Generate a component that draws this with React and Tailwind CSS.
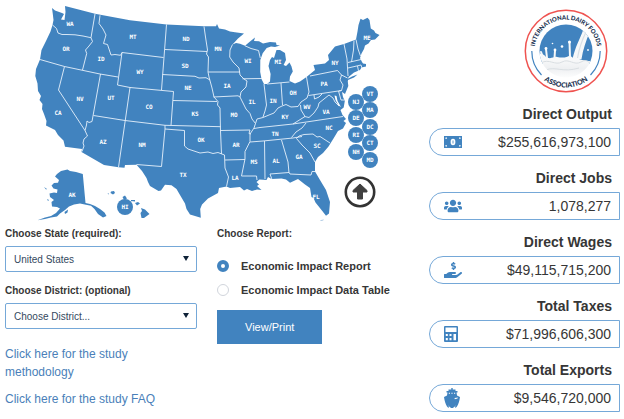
import { useState } from "react";
import { FaHandHoldingUsd, FaUsers } from "react-icons/fa";

const MAINLAND =
  "M52 8L55 10.5L62 13L64 14L61 19.5L64.5 20L65.5 12L65 6L95 13.7L130 20.2L166.5 24.5L204 26.3L216 26.3L217 24L219 28.5L225 29.5L230 31.5L235 32.2L244 33.5L238 38.5L232.5 44.5L236 43L240 43.8L245 45.8L250 41.5L255 37.6L254 41L259 41.2L263 43.6L270 42L276 42.6L276.5 45L280 45.5L275 47L271 46.6L266.7 48L262.7 53.3L260.3 60L260.2 72L261.5 79L264 84L267 84L270 81.5L270.6 74L268.5 66L270 60L272 57L274 58L276.5 50L280 50L285 53L286 60L283.6 65L286 66L289.5 62.5L291.5 66.5L292.8 71.5L290 76.5L289.5 81L295 83.5L300 81.5L306.5 77L315 70L313.5 65L325 63.5L329 60L328 55L335 46.5L344 44L356 39.5L357.5 31.5L358.5 25L360.5 18.8L363 20L367.5 17.7L369.5 20L370.8 28.5L374 30.5L375.5 33L379.5 35L375 39.5L371 40L368.5 43.5L365 45.5L364 49L361.5 53.5L360 58L362 62L363 63.5L366 64L366 66.5L361.5 67.5L360 70L354 72.5L348.5 77L347.8 81.5L348.3 86L345 94L342 92L343 97L344.8 101L343.7 107.5L340.5 110L342.5 115L346 119L343.5 121L346 123L343 128.5L338 131L333.5 138.5L328.5 146.5L323 153L318 157L315 162L315 171.5L320 180L326 190L330 202L329 213.5L326 215.8L321.5 210L315.5 202.5L313.5 198L311.5 197L310 188L305 184.5L298 179L290 182.8L286 179.5L281.5 178.5L271.5 179L268 177L266.5 180L259.5 179.5L256.5 182L259 184.5L257 186L261.5 190L257 189.5L252 191L247 189L244 190.5L240 187L230 188L226.5 186.5L219 188L218 193L208 198.5L202 204.5L200.2 209L200.8 217.8L190 214.5L186.5 209L185 203.5L180 195L176.5 189L171.5 185.3L165 184.8L161 190.5L158.5 191L150 186L148 182L146.5 178L142 171L136.5 164.8L125 165L124.5 167.8L118.5 167.3L104 165L81.5 152L82 149L65 146.8L63.5 140.5L58 135L55 130L46 125.5L46.5 121L44 114L42 109L42.5 104L39.5 100L41 96L38 91L37.5 83.5L35.3 76L36 69L40 59.5L41.5 50L46 41L50.5 31.5L52.5 25L53.5 20L52.8 14Z";

const ALASKA =
  "M67.5 169.5L70 171L76 172L82.8 174L85.5 203L90 204L95 206L100 209L104.5 212.5L106.5 216L103 217.5L98 214L94.5 209L91 205.8L86 204.8L80 203.5L74 204.5L69 206.5L65 210L60 213.5L57 216.5L51 217.5L45 219L37.5 220.3L45 217.5L51 216L56 213L60 208.5L57 207L52 206.5L51.5 202L54 200L50 197L49.5 193.5L54 192.5L57 193L57.5 189.5L53.5 188.5L51.5 185.5L54 183L58 182.8L59 180L55 176.5L57 174L61 171Z";

const BORDERS = [
  "M52.5 25L56.5 28.5L58 33L62 34.5L67 34.5L75 34.8L83 36L91 37.7",
  "M95 14L91 37.7L92.5 41.5L89 46L85.5 50L86.7 53.5L82.5 70",
  "M100 15.3L99 23.5L103 29L106 35L103.5 43.5L107.5 44.5L111 55L115 54.5L120.5 55.3L122 52.5",
  "M122 52.5L163.5 57.5",
  "M122 52.5L117.5 85",
  "M40 59.5L64.5 66.5L100 74L118 77",
  "M117.5 85L130 87.5L173.5 91.5",
  "M64.5 66.5L58.5 90L85 130.5L87.5 136L84 139L83 143L84 146L82 151.5",
  "M100.5 74L92 121.5L89 122.5L87 121L86.5 125L85 130.5",
  "M93.5 115.5L125 120.5L165 125.3L220.5 126.7",
  "M130 87.5L118.5 167.3",
  "M166.5 24.5L161.5 90",
  "M165 49.5L207 51.5",
  "M162.5 74.5L195 76.3L199 78L206 77.7L210 80",
  "M204 26.5L205.5 37L207.5 50L206.5 54L208.5 57L208 72L209 77L212 88L214 97L218 101.5L217.5 105L220 108L220.5 131L221.5 154",
  "M208 72L240 72",
  "M213.5 97L238 95.8L240 97",
  "M232.5 44.5L230 50L229.7 57L233 62L239 68L240 75L244 79L247 81L246 87L241 92L240 97L243 103L246 109L250 113.5L252 119L255.5 123.5L254 128L250 134L250 141.5L245 151.5L245 159L241.5 176L256.5 176L257 180",
  "M242.5 78.8L262 78.5",
  "M245 45.8L251 48.5L258.5 50.5L260.3 58",
  "M173.5 91.5L171 125.5",
  "M173 100.5L217 101.5",
  "M165 125.3L165 129L184.5 130.5L184.5 146L188 149L194 151L200 153L208 152L213 153.5L218 152.5L224.5 155L225 168L228.5 177L226.5 186.5",
  "M165 129L161.5 166.5L136.5 164.5",
  "M225 160L245 159.5",
  "M220.5 130.5L250 130L249 133.5L251 134",
  "M254 128.5L260 127.5L293 124L343 116.5",
  "M250 142L263 141L293 138L302 136.5",
  "M306 123L302 128L296 132L291.5 137.5",
  "M296.5 138.5L299 136L304 134.5L313 134L317 137L320 136.5L330 143",
  "M296.5 138.5L302 145L310 153L315 162",
  "M264.5 141L265 179",
  "M281.5 140L288 162L289 173",
  "M272 179.5L270 174L289 172.5L290 174L311 175L312 171.5L315 171.5",
  "M264 84L266.5 105L265 111L263 117",
  "M255.5 123.5L257 119L263 117.5L269 115L274 113L278 108L282 106L286 104.5L291 107L298 106.5L301 102L307 98L309 92L306.5 77",
  "M281 83L282.5 105",
  "M267 84L289.5 82",
  "M308.5 95.5L341.5 90.5",
  "M310 76L337.5 70.5L341.5 75L340 80L343 85L341.5 90.5L339 91",
  "M341.5 75L347.5 78",
  "M344 44L347 59L348 76",
  "M354 40.5L353.5 50L351.5 62",
  "M356 39.5L358 49L360.5 56",
  "M348 62.5L361 59.5",
  "M348 68L361 65L362 68",
  "M357.5 66L358.5 71",
  "M293 124L305 116.5L301 110L300.5 105",
  "M304.5 116.5L309 117.5L314 113L318 107L319 103L324 99L329 95L333 98L335 102L339 106",
  "M314 95L314.5 99L319 97L322 94",
  "M338.5 91L341 100L344.5 100",
];

const STATES = [
  ["WA", 70, 24], ["OR", 66, 49], ["ID", 101, 59], ["MT", 133, 37], ["WY", 140, 72],
  ["ND", 186, 39], ["SD", 185, 66], ["NE", 188, 88], ["MN", 218, 49], ["WI", 248, 61],
  ["IA", 227, 86], ["IL", 252, 102], ["MI", 278, 62], ["IN", 273, 101], ["OH", 293, 93],
  ["PA", 324, 84], ["NY", 335, 63], ["ME", 367, 38], ["WV", 307, 107], ["VA", 326, 112],
  ["KY", 285, 117], ["NC", 329, 128], ["TN", 275, 134], ["SC", 317, 146], ["GA", 299, 157],
  ["AL", 276, 161], ["MS", 254, 162], ["LA", 235, 178], ["AR", 236, 145], ["MO", 234, 115],
  ["KS", 195, 114], ["OK", 201, 140], ["TX", 183, 175], ["NM", 142, 145], ["AZ", 103, 142],
  ["CO", 149, 107], ["UT", 111, 98], ["NV", 80, 99], ["CA", 58, 113], ["AK", 72, 195],
  ["FL", 316, 197],
];

// States too small to hold a label on the map
const BUBBLES = [
  ["VT", 370, 94], ["NJ", 356, 102], ["MA", 370, 110], ["DE", 356, 118], ["DC", 370, 127],
  ["RI", 356, 135], ["CT", 370, 143], ["NH", 356, 152], ["MD", 370, 160], ["HI", 125, 207],
];

function StateLabel({ name, x, y }) {
  return (
    <text x={x} y={y + 2} textAnchor="middle" fill="#fff" className="font-['DejaVu_Sans_Mono',monospace] text-[6px] font-bold">
      {name}
    </text>
  );
}

function UsMap() {
  return (
    <svg viewBox="5 0 385 222" className="block w-full" role="img" aria-label="Map of the United States">
      <g fill="#4183bf">
        <path d={MAINLAND} />
        <path d={ALASKA} />
        <path d="M64.500 212L68 209.500L67.500 212.500L65 214Z" />
        <path d="M44 187L47 189L46 189.500ZM47 199L49 200L48 201Z" />
        <path d="M107.500 193.500L109 193.500L108.500 194.500ZM111 191.500L114 191L115 193L113 194.500L110.500 193Z" />
        <path d="M122.500 197L125 195.500L127 198.500L124 200ZM131 200L135 200L135 201.500L131 201ZM135 203L138 202L140 203.500L137 205.500Z" />
        <path d="M141 208L145 209.500L149.500 214L144 218L141.500 218L140.500 213L142 211Z" />
        <path d="M347.500 79L352 76.500L357.500 74.500L354 77.500L348 80Z" />
        <path d="M320 221L323 220.500L324 219.500L321 220Z" opacity=".5" />
      </g>
      <path d="M334.500 95.500L336.500 96L337.500 101L341 107L338.500 105.500L335.500 100Z" fill="#fff" />
      <path d={BORDERS.join("")} fill="none" stroke="#e6f1fa" strokeWidth=".9" strokeLinejoin="round" />
      {STATES.map(([name, x, y]) => (
        <StateLabel key={name} name={name} x={x} y={y} />
      ))}
      {BUBBLES.map(([name, x, y]) => (
        <g key={name}>
          <circle cx={x} cy={y} r="8" fill="#4183bf" />
          <StateLabel name={name} x={x} y={y} />
        </g>
      ))}
    </svg>
  );
}

function Logo() {
  return (
    <svg viewBox="0 0 84 84" className="mr-3 size-[84px] self-end" role="img" aria-label="International Dairy Foods Association">
      <defs>
        <path id="logo-top" d="M10.500 42A31.500 31.500 0 0 1 73.500 42" />
        <path id="logo-bottom" d="M5.500 42A36.500 36.500 0 0 0 78.500 42" />
        <clipPath id="logo-disc">
          <circle cx="42" cy="42" r="26.500" />
        </clipPath>
        <linearGradient id="milk" x1="0" y1="0" x2="0" y2="1">
          <stop offset="0" stopColor="#fff" />
          <stop offset=".6" stopColor="#eef0f2" />
          <stop offset="1" stopColor="#fff" />
        </linearGradient>
      </defs>
      <circle cx="42" cy="42" r="40.700" fill="#fff" stroke="#ef5350" strokeWidth="1.500" />
      <g clipPath="url(#logo-disc)">
        <rect x="15" y="15" width="54" height="40" fill="#4183bf" />
        <path d="M12 44C17 44 20 45 22 48C27 51 30 47 33 48C38 49 43 49 46 46C48 49 51 50 55 50C60 52 63 51 70 53V70H12Z" fill="url(#milk)" />
        <path d="M22 40L23 49M31 41.500L30.500 49M45.500 33L46 48M17 43L19 48" fill="none" stroke="#f6f8f9" strokeWidth="2" strokeLinecap="round" />
        <path d="M59.500 20C56 30 51 38 48.500 50H57.500C59 41 62 31 66 23Z" fill="#f6f8f9" />
        <path d="M62.500 22C58 31 55 40 53.500 49" fill="none" stroke="#d8dfe5" strokeWidth="1.200" />
        <g fill="#fff">
          <circle cx="28.500" cy="34.500" r=".8" />
          <circle cx="38" cy="37.500" r="1.300" />
          <circle cx="22" cy="39.500" r="1.400" />
          <circle cx="31" cy="41" r="1.400" />
          <circle cx="45.500" cy="33" r="1.500" />
          <circle cx="64" cy="41" r=".9" />
        </g>
        <path d="M17 54C25 49 31 57 38 53S50 57 57 53S64 55 68 54M22 61C31 57 39 64 55 59" fill="none" stroke="#d9dee2" strokeWidth="1" />
      </g>
      <path d="M7.800 42A34.200 34.200 0 0 0 17.500 66M76.200 42A34.200 34.200 0 0 1 66.500 66" fill="none" stroke="#4183bf" strokeWidth="1.200" />
      <g fill="#17304f" className="font-[Lato,sans-serif] font-black">
        <text textAnchor="middle" className="text-[6px]">
          <textPath href="#logo-top" startOffset="50%">INTERNATIONAL DAIRY FOODS</textPath>
        </text>
        <text textAnchor="middle" className="text-[7px]">
          <textPath href="#logo-bottom" startOffset="50%">ASSOCIATION</textPath>
        </text>
      </g>
    </svg>
  );
}

function BillIcon() {
  return (
    <svg viewBox="0 0 18 18" className="size-[18px]" fill="currentColor" aria-hidden="true">
      <path fillRule="evenodd" d="M0 3H18V15H0ZM1.500 4.500V6H2.300L3 5.300V4.500ZM15 4.500V5.300L15.700 6H16.500V4.500ZM1.500 12V13.500H3V12.700L2.300 12ZM15.700 12L15 12.700V13.500H16.500V12ZM9 5.800A2.400 3.200 0 1 0 9 12.200A2.400 3.200 0 1 0 9 5.800Z" />
      <path d="M8.600 7.500H9.400V10.500H8.600Z" />
    </svg>
  );
}

function CalculatorIcon() {
  return (
    <svg viewBox="0 0 14 16" className="h-4 w-3.5" fill="currentColor" aria-hidden="true">
      <path fillRule="evenodd" d="M1 0H13Q14 0 14 1V15Q14 16 13 16H1Q0 16 0 15V1Q0 0 1 0ZM1.500 1.500V6H12.500V1.500ZM1.800 8V10H3.800V8ZM5.500 8V10H7.500V8ZM1.800 12V14.200H3.800V12ZM5.500 12V14.200H7.500V12ZM9.500 8V14.200H12V8Z" />
    </svg>
  );
}

function ShipIcon() {
  return (
    <svg viewBox="0 0 16 20" className="h-5 w-4" fill="currentColor" aria-hidden="true">
      <path d="M7.300 0H8.700V1.500H11.500V3H13.500V4.500H12.500L13 7.500L16 9C15.500 13 14.500 16 13 18.500L11.500 20L10.500 18.500L9 20H7L5.500 18.500L4.500 20L3 18.500C1.500 16 .5 13 0 9L3 7.500L3.500 4.500H2.500V3H4.500V1.500H7.300Z" />
      <path d="M4.800 4.800H6V5.800H4.800ZM7.400 4.800H8.600V5.800H7.400ZM10 4.800H11.200V5.800H10ZM10.500 10L14 9.500L13.500 10.500L10.800 11.200ZM4.800 16.500L5.300 20H4.800ZM11.200 16.500L10.700 20H11.200Z" fill="#fff" />
    </svg>
  );
}

const STATS = [
  { label: "Direct Output", value: "$255,616,973,100", icon: <BillIcon /> },
  { label: "Direct Jobs", value: "1,078,277", icon: <FaUsers className="size-[18px]" /> },
  { label: "Direct Wages", value: "$49,115,715,200", icon: <FaHandHoldingUsd className="size-[18px]" /> },
  { label: "Total Taxes", value: "$71,996,606,300", icon: <CalculatorIcon /> },
  { label: "Total Exports", value: "$9,546,720,000", icon: <ShipIcon /> },
];

function Stat({ label, value, icon }) {
  return (
    <div>
      <dt className="pr-2 text-right text-sm leading-5 font-bold">{label}</dt>
      <dd className="mt-1 flex h-7 items-center justify-between rounded-l-full rounded-r-xs border border-[#75a8d8] pr-2 pl-3.5 text-sm">
        <span className="text-[#4183bf]">{icon}</span>
        {value}
      </dd>
    </div>
  );
}

function SelectField({ id, label, options }) {
  return (
    <div>
      <label htmlFor={id} className="block text-[10px] leading-4 font-bold">{label}</label>
      <div className="relative mt-1">
        <select id={id} className="block h-[26px] w-full appearance-none rounded-xs border border-[#75a8d8] bg-white pr-6 pl-2 text-[10px] text-[#34495e]">
          {options.map((o) => (
            <option key={o}>{o}</option>
          ))}
        </select>
        <svg viewBox="0 0 6 5" className="pointer-events-none absolute top-[10px] right-2 h-[5px] w-1.5" aria-hidden="true">
          <path d="M0 0H6L3 5Z" fill="#0f2238" />
        </svg>
      </div>
    </div>
  );
}

const REPORTS = ["Economic Impact Report", "Economic Impact Data Table"];

export default function App() {
  const [report, setReport] = useState(REPORTS[0]);

  return (
    <main className="grid grid-cols-[minmax(0,1fr)_191px] gap-x-[39px] bg-white pr-1 pl-[5px] font-['Liberation_Sans',Arial,sans-serif] text-[#363636]">
      <section>
        <div className="relative">
          <UsMap />
          <button type="button" aria-label="Back to top" className="absolute right-3.5 bottom-3.5 size-8">
            <svg viewBox="0 0 32 32" className="size-8" aria-hidden="true">
              <circle cx="16" cy="16" r="14.200" fill="#fff" stroke="#333" strokeWidth="2.600" />
              <path d="M16 8L23 14.500V16H18.500V23H13.500V16H9V14.500Z" fill="#404040" stroke="#404040" strokeLinejoin="round" />
            </svg>
          </button>
        </div>
        <form className="grid grid-cols-[minmax(0,1fr)_173px] gap-x-5 pt-1" onSubmit={(e) => e.preventDefault()}>
          <div>
            <div className="space-y-[11px]">
              <SelectField id="state" label="Choose State (required):" options={["United States"]} />
              <SelectField id="district" label="Choose District: (optional)" options={["Choose District..."]} />
            </div>
            <div className="mt-4 space-y-[9px] pr-8 text-xs leading-[18px] text-[#4a7fb9]">
              <a href="#methodology" className="block">Click here for the study methodology</a>
              <a href="#faq" className="block">Click here for the study FAQ</a>
            </div>
          </div>
          <fieldset>
            <legend className="text-[10px] leading-4 font-bold">Choose Report:</legend>
            <div className="mt-4 space-y-2">
              {REPORTS.map((name) => (
                <label key={name} className="flex items-center gap-3 text-[11px] leading-4 font-bold whitespace-nowrap">
                  <input
                    type="radio"
                    name="report"
                    checked={report === name}
                    onChange={() => setReport(name)}
                    className="size-3 shrink-0 appearance-none rounded-full border border-gray-300 bg-white checked:border-4 checked:border-[#4183bf]"
                  />
                  {name}
                </label>
              ))}
            </div>
            <button type="submit" className="mt-3 h-[34px] bg-[#4183bf] px-7 text-[11px] text-white">
              View/Print
            </button>
          </fieldset>
        </form>
      </section>
      <aside className="flex flex-col pt-[9px]">
        <Logo />
        <dl className="mt-[11px] space-y-3">
          {STATS.map((s) => (
            <Stat key={s.label} {...s} />
          ))}
        </dl>
      </aside>
    </main>
  );
}
